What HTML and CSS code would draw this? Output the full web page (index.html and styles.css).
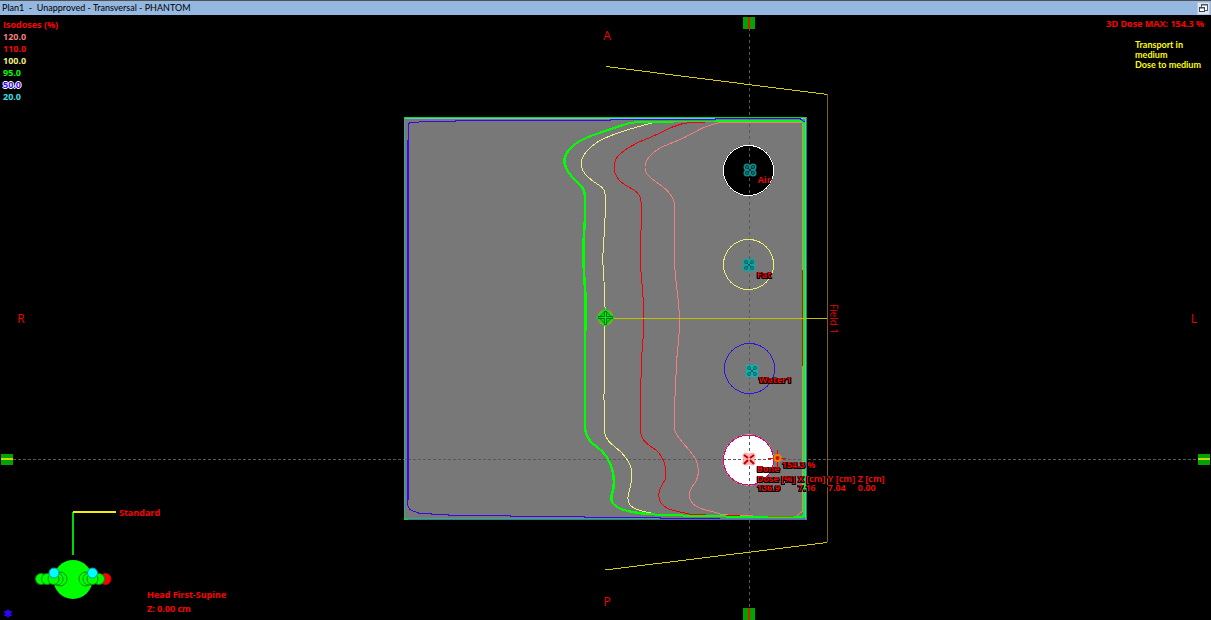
FILE: index.html
```html
<!DOCTYPE html>
<html lang="en">
<head>
<meta charset="utf-8">
<title>Plan1 - Unapproved - Transversal - PHANTOM</title>
<link rel="stylesheet" href="styles.css">
</head>
<body>
<header class="titlebar">
  <h1 class="title">Plan1&nbsp; -&nbsp; Unapproved - Transversal - PHANTOM</h1>
  <button class="restore" type="button" aria-label="Restore view">
    <svg width="11" height="11" viewBox="0 0 11 11">
      <rect x="3.5" y="1.5" width="6" height="6" fill="#fff" stroke="#4c5868"/>
      <path d="M3 2h7" stroke="#4c5868"/>
      <rect x="1.5" y="4.500" width="5" height="4" fill="#fff" stroke="#3c4858"/>
      <path d="M1 5h6" stroke="#3c4858"/>
    </svg>
  </button>
</header>
<main class="view">
  <svg class="scene" viewBox="0 15 1211 605" aria-label="Transversal dose distribution">
    <defs>
      <g id="marker">
        <circle cx="-3" cy="-3" r="3.500"/><circle cx="3" cy="-3" r="3.500"/>
        <circle cx="-3" cy="3" r="3.500"/><circle cx="3" cy="3" r="3.500"/>
        <rect x="-3" y="-3" width="6" height="6"/>
      </g>
      <g id="marker-rings" fill="none">
        <circle cx="-3" cy="-3" r="1.500"/><circle cx="3" cy="-3" r="1.500"/>
        <circle cx="-3" cy="3" r="1.500"/><circle cx="3" cy="3" r="1.500"/>
        <path d="M-2-2 2 2M2-2-2 2"/>
      </g>
    </defs>

    <rect x="404" y="117" width="403" height="403" fill="#787878"/>
    <circle cx="748.500" cy="170.500" r="25.500" fill="#000"/>
    <circle cx="748.500" cy="460" r="25.500" fill="#fff"/>

    <!-- crosshair -->
    <path class="dash" d="M749.500 28V608"/>
    <path class="dash dense" d="M13 459.500H1198"/>

    <!-- body outline and outer isodoses -->
    <g class="line">
      <path d="M404.500 519V118M405 518.500H806" stroke="#30a8a8"/>
      <path d="M404 117.500H806" stroke="#00d830"/>
      <path d="M405 118.500H806" stroke="#70c8c8"/>
      <path d="M404 519.500H806" stroke="#507878"/>
      <path d="M663 518.500H805M804.500 121V516" stroke="#5878d8"/>
      <path d="M408.500 500V150V124L410 122.500H418L420 121.500H455V120.500H610V119.500H715V118.500H800L804.500 122" stroke="#3808e8"/>
      <path d="M407.500 140V504Q408 510 413 511L420 513.500H431V514.500H448V515.500H510V516.500H584V517.500H660V518.500H720" stroke="#3808e8"/>
      <path d="M404.500 516v3.500h3" stroke="#00e000"/>
    </g>

    <!-- 120 % -->
    <path class="line" stroke="#f08080" d="M802.500 122H723C700 126 696 133 679 140C664 146 655 149 649 157C643 165 644 173 652 179C660 185 665 187 670 194C675 200 674.500 204 674.500 215V260C675 283 679.500 302 679.500 320C679.500 340 677 350 676.500 365L674.500 407V430C679 442 690 448 696 460C700 470 699 479 692 487C687 494 689 502 696 506C701 510 709 510 720 514C735 517 760 516 797 516L802.500 511Z"/>
    <!-- 110 % -->
    <path class="line" stroke="#f00000" d="M705 122.500H690C672 124 661 134 646 139C632 145 620 152 616 159C611 169 616 179 625 185C633 189 641 193 641 202V230C641 248 639.500 255 640.500 266C642 285 644 302 644 318C644 335 642 345 641.500 362L640.500 395V432C642 442 650 446 656 450C664 457 668 470 665 480C660 488 656 495 661 503C667 511 678 511 689 514C702 515 720 516 740 516"/>
    <path class="line" stroke="#f00000" d="M802.500 270V366"/>
    <!-- 100 % -->
    <path class="line" stroke="#f0f080" d="M656 122C636 127 609 134 596 143C579 155 577 167 588 177C596 185 605 186 605 194V218C605 234 602 250 603 265C604 282 605.500 298 605 318C605 340 604 360 604 400V430C606 445 618 446 625 457C634 467 633 478 629 492C625 505 632 508 642 511L655 514"/>
    <!-- 95 % -->
    <path class="line iso95" stroke="#0f0" d="M804 123V516L801 517H745C712 516 680 516 645 514C625 512 614 508 612 501C610 496 615 491 614 480C614 469 609 458 602 451C590 442 586 438 585 426V345C586 320 587 305 585 285C583 260 583 245 585 222V195C585 186 576 183 570 174C563 165 562 156 572 147C580 138 600 133 620 126C635 120 648 122 675 121.500H715L750 121H800Z"/>
    <path class="line iso95-inner" stroke="#0f0" d="M645 513C625 511 614 508 611 501C609 496 614 491 613 480C613 469 608 458 601 451C589 442 585 438 584 426V345C585 320 586 305 584 285C582 260 582 245 584 222V195C584 186 575 183 569 174C562 165 561 156 571 147C579 138 599 133 619 126"/>
    <path class="line" stroke="#f08080" d="M802.500 124V269M802.500 367V511M725 122.500H800"/>
    <path class="line" stroke="#a07000" d="M768 516.500h26"/>
    <path class="line" d="M805.500 118V519" stroke="#50c8d0"/>
    <path class="line" d="M806.500 118V519" stroke="#1b8080"/>

    <!-- treatment field -->
    <g class="line">
      <path d="M605 318.500H827" stroke="#c0c000"/>
      <path d="M606 66.500L827.500 94.500M827.500 542.500L605 570" stroke="#d4cc00"/>
      <path d="M827.500 94V542" stroke="#806010"/>
    </g>

    <!-- structures -->
    <g class="line">
      <circle cx="748.500" cy="170.500" r="25" stroke="#fff"/>
      <circle cx="748.500" cy="264.500" r="25" stroke="#f0f070"/>
      <circle cx="749.500" cy="368.500" r="25" stroke="#3810e0"/>
      <circle cx="748.500" cy="460" r="25" stroke="#e00070"/>
    </g>
    <g transform="translate(750 170)"><use href="#marker" fill="#108c8c"/><use href="#marker-rings" stroke="#033"/></g>
    <g transform="translate(749 265)"><use href="#marker" fill="#10a4a4"/><use href="#marker-rings" stroke="#075c5c"/></g>
    <g transform="translate(752 371)"><use href="#marker" fill="#10b0b0"/><use href="#marker-rings" stroke="#075c5c"/></g>
    <g transform="translate(749 459)"><use href="#marker" fill="#ffb4b4"/><path d="M-5-4-1-1M5-4 1-1M-5 5-1 1M5 5 1 1" stroke="#c00000" stroke-width="2"/></g>

    <!-- isocenter -->
    <circle cx="605.500" cy="317.500" r="8" fill="#b09c10"/>
    <path d="M605.500 308L615 317.500 605.500 327 596 317.500Z" fill="#10d820"/>
    <path d="M605.500 311L612 317.500 605.500 324 599 317.500Z" fill="none" stroke="#088010"/>
    <path d="M604.500 311.500h2v5h6v2h-6v6h-2v-6h-6v-2h6Z" fill="#00e820" stroke="#067010"/>

    <!-- dose maximum -->
    <path d="M768 458.500H786M777.500 450V467" stroke="#f00000"/>
    <circle cx="777.500" cy="458" r="3" fill="#d01000" stroke="#f08000" stroke-width="2"/>

    <!-- edge handles -->
    <g fill="#00a400">
      <path d="M743 17h12v12h-12zM743 608h12v12h-12zM1 454h12v11H1zM1198 454h12v11h-12z"/>
      <path d="M748 17h2v12h-2zM748 608h2v12h-2z" fill="#d02000"/>
      <path d="M1 458h12v2H1zM1198 458h12v2h-12z" fill="#c8d800"/>
    </g>

    <!-- patient orientation figure -->
    <path d="M73 555V512" stroke="#00d800" stroke-width="2"/>
    <path d="M73 512H116" stroke="#f0f000" stroke-width="2"/>
    <circle cx="73" cy="579.500" r="19.500" fill="#0f0"/>
    <g fill="#0f0" stroke="#008c00">
      <circle cx="105.500" cy="579" r="5.500" fill="#f00" stroke="#c00"/>
      <circle cx="41" cy="579" r="5.500"/><circle cx="47" cy="579" r="5.500"/>
      <circle cx="60" cy="579" r="7"/><circle cx="57" cy="579" r="6"/><circle cx="53.500" cy="579" r="5.500"/>
      <circle cx="86" cy="579" r="7"/><circle cx="89" cy="579" r="6"/><circle cx="99" cy="579" r="5.500"/><circle cx="92.500" cy="579" r="5.500"/>
    </g>
    <g fill="#0ff" stroke="#009898"><circle cx="54" cy="573" r="5"/><circle cx="92.500" cy="573" r="5"/></g>
    <path d="M8 609L9.500 611H12L11 613.500 12 616H9.500L8 618 6.500 616H4L5 613.500 4 611H6.500Z" fill="#3000ff"/>

    <g class="note">
      <text x="119" y="516">Standard</text>
      <text x="147" y="598">Head First-Supine</text>
      <text x="147" y="612">Z: 0.00 cm</text>
    </g>
    <g class="note outlined">
      <text x="758" y="183">Air</text>
      <text x="757" y="278">Fat</text>
      <text x="759" y="383">Water1</text>
      <text x="757" y="472">Bone</text>
      <text x="782" y="468">154.3 %</text>
      <text x="757" y="482">Dose [%]</text><text x="798" y="482">X [cm]</text><text x="828" y="482">Y [cm]</text><text x="858" y="482">Z [cm]</text>
      <text x="757" y="491">136.9</text><text x="798" y="491">7.16</text><text x="828" y="491">7.04</text><text x="858" y="491">0.00</text>
    </g>
    <text class="field" transform="translate(830 304) rotate(90)">Field 1</text>
    <g class="axis">
      <text x="607" y="40">A</text><text x="607" y="606">P</text>
      <text x="21" y="323">R</text><text x="1194" y="323">L</text>
    </g>
  </svg>
  <div class="overlay">
    <section class="legend">
      <h2 class="legend-title">Isodoses (%)</h2>
      <ul class="levels">
        <li class="l120">120.0</li>
        <li class="l110">110.0</li>
        <li class="l100">100.0</li>
        <li class="l95">95.0</li>
        <li class="l50">50.0</li>
        <li class="l20">20.0</li>
      </ul>
    </section>
    <section class="info">
      <p class="max">3D Dose MAX: 154.3 %</p>
      <p class="mode">Transport in<br>medium<br>Dose to medium</p>
    </section>
  </div>
</main>
</body>
</html>
```
FILE: styles.css
```css
* { box-sizing: border-box; }

body {
  margin: 0;
  min-height: 100vh;
  display: flex;
  flex-direction: column;
  background: #000;
  color: #f00;
  font-family: "Open Sans", "Noto Sans", sans-serif;
}

h1, h2, p, ul { margin: 0; padding: 0; }

.titlebar {
  display: flex;
  align-items: center;
  justify-content: space-between;
  height: 15px;
  padding: 0 1px 0 2px;
  border-top: 1px solid #505050;
  background: #94b8e0;
}

.title {
  color: #000;
  font-family: Lato, "Open Sans", sans-serif;
  font-size: 9px;
  line-height: 14px;
  font-weight: 400;
}

.restore {
  display: flex;
  padding: 0;
  border: 1px solid #b8c8dc;
  background: #dce6f2;
}

.view {
  flex: 1;
  display: grid;
  min-height: 0;
}

.scene, .overlay { grid-area: 1 / 1; }

.scene { width: 100%; height: 100%; }

.overlay {
  display: flex;
  justify-content: space-between;
  padding: 3px 7px 0 3px;
  font-size: 9px;
  line-height: 12px;
  font-weight: 700;
}

.legend { padding-top: 1px; }
.legend-title { font-size: 9px; }
.levels { list-style: none; }
.l120 { color: #f08080; }
.l110 { color: #f00; }
.l100 { color: #f0f080; }
.l95 { color: #0f0; }
.l50 {
  color: #3808f0;
  text-shadow: 1px 0 #fff, -1px 0 #fff, 0 1px #fff, 0 -1px #fff;
}
.l20 { color: #40e0e0; }

.info {
  display: flex;
  flex-direction: column;
  gap: 10px;
}

.mode {
  align-self: flex-end;
  padding-right: 3px;
  color: #ff0;
  font-family: Lato, "Open Sans", sans-serif;
  line-height: 10px;
}

.line {
  fill: none;
  stroke-width: 1;
  shape-rendering: crispEdges;
}
.iso95 { stroke-width: 2; }
.dash {
  fill: none;
  stroke: #585858;
  stroke-dasharray: 3 3;
}
.dense { stroke-dasharray: 3 2; }

.note {
  fill: #f00;
  font-size: 9px;
  font-weight: 700;
}

.outlined {
  filter: drop-shadow(1px 0 #000) drop-shadow(-1px 0 #000) drop-shadow(0 1px #000);
}

.field { fill: #e80000; font-size: 10px; }
.axis { fill: #f00000; font-size: 12px; text-anchor: middle; }
```
